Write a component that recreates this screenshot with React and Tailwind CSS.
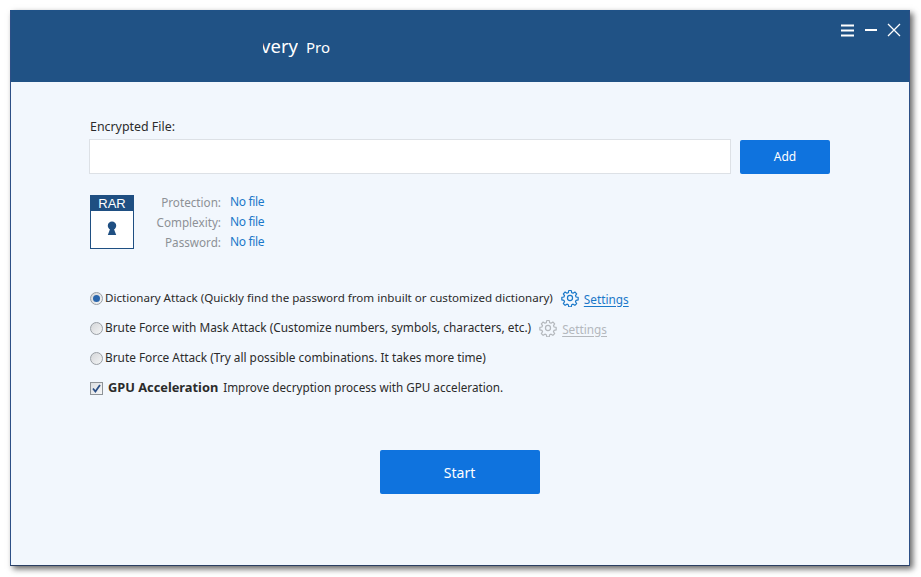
import { useState } from 'react';

const SettingsLink = ({ disabled }) => (
  <span className={`flex items-center gap-[5px] ${disabled ? 'text-[#b4b8bd]' : 'text-[#1a78c9]'}`}>
    <svg width="18" height="18" viewBox="0 0 24 24" fill="none" stroke="currentColor" strokeWidth="1.6" strokeLinejoin="round">
      <path d="M10.3 2h3.4l.5 2.8 1.9.8 2.4-1.6 2.4 2.4-1.6 2.4.8 1.9 2.8.5v3.4l-2.8.5-.8 1.9 1.6 2.4-2.4 2.4-2.4-1.6-1.9.8-.5 2.8h-3.4l-.5-2.8-1.9-.8-2.4 1.6-2.4-2.4 1.6-2.4-.8-1.9-2.8-.5v-3.4l2.8-.5.8-1.9-1.6-2.4 2.4-2.4 2.4 1.6 1.9-.8z" />
      <circle cx="12" cy="12" r="3.4" />
    </svg>
    <span className="pt-[3px] text-[11.8px] underline underline-offset-2">Settings</span>
  </span>
);

const Radio = ({ checked }) => (
  <span className="ml-[1px] flex h-[13px] w-[13px] shrink-0 items-center justify-center rounded-full border border-[#9a9fa5] bg-gradient-to-br from-[#d4d6d9] to-[#f4f5f6]">
    {checked && <span className="h-[7px] w-[7px] rounded-full bg-[#2a66ac]" />}
  </span>
);

const attacks = [
  { label: 'Dictionary Attack (Quickly find the password from inbuilt or customized dictionary)', size: 'pb-[1px] text-[11.6px]', checked: true, settings: 'on' },
  { label: 'Brute Force with Mask Attack (Customize numbers, symbols, characters, etc.)', size: 'text-[11.85px]', settings: 'off' },
  { label: 'Brute Force Attack (Try all possible combinations. It takes more time)', size: 'text-[11.85px]' },
];

const info = [
  ['Protection:', 'No file'],
  ['Complexity:', 'No file'],
  ['Password:', 'No file'],
];

export default function App() {
  const [path, setPath] = useState('');

  return (
    <div className="h-[577px] w-[921px] overflow-hidden bg-white pl-[10px] pt-[10px] text-[11.6px] text-[#2b2b2b] [font-family:'Noto_Sans',sans-serif]">
      <div className="flex h-[556px] w-[900px] flex-col border border-b-[#2b3f63] border-l-[#2d4f86] border-r-[#2d4f86] border-t-[#1f5288] bg-[#f2f7fd] shadow-[3px_3px_6px_rgba(0,0,0,0.6)]">
        {/* Title bar */}
        <div className="flex h-[71px] shrink-0 items-start justify-between bg-[#205285]">
          <div className="ml-[252px] mt-[21px] flex items-baseline gap-[8px] text-white">
            <span className="flex w-[35px] justify-end overflow-hidden text-[18.5px] leading-[28px]">very</span>
            <span className="text-[15px]">Pro</span>
          </div>
          <div className="mr-[8px] mt-[12px] flex items-center gap-[10px] text-white">
            <svg className="mr-[1px]" width="13" height="13" viewBox="0 0 13 13" stroke="currentColor" strokeWidth="2">
              <path d="M0 1.5h13M0 6.5h13M0 11.5h13" />
            </svg>
            <svg width="12" height="13" viewBox="0 0 12 13" stroke="currentColor" strokeWidth="2">
              <path d="M0 6h12" />
            </svg>
            <svg width="14" height="14" viewBox="0 0 14 14" stroke="currentColor" strokeWidth="1.3">
              <path d="M1 1l12 12M13 1L1 13" />
            </svg>
          </div>
        </div>

        <div className="flex flex-1 flex-col pl-[78px] pr-[79px] pt-[36px]">
          <label className="pl-[1px] text-[12.4px] leading-[18px]">Encrypted File:</label>

          <div className="mt-[3px] flex items-end gap-[9px]">
            <input
              value={path}
              onChange={(e) => setPath(e.target.value)}
              className="h-[35px] w-[642px] border border-[#dde1e6] bg-white outline-none"
            />
            <button className="h-[34px] w-[90px] rounded-[2px] bg-[#0f73de] text-[12px] text-white">Add</button>
          </div>

          {/* File info */}
          <div className="mt-[21px] flex items-start">
            <div className="ml-[1px] h-[54px] w-[44px] border border-[#1f4f82] bg-white">
              <div className="bg-[#1f4f82] text-center text-[13px] leading-[15px] text-white [font-family:'Liberation_Sans',sans-serif]">RAR</div>
              <div className="flex justify-center pt-[10px]">
                <svg width="12" height="15" viewBox="0 0 12 16" fill="#1f4f82">
                  <circle cx="6" cy="5" r="4.5" />
                  <path d="M4.5 7h3l3 8h-9z" />
                </svg>
              </div>
            </div>
            <div className="ml-[21px] mt-[-3px] grid grid-cols-[66px_auto] gap-x-[9px] leading-[20px]">
              {info.map(([name, value]) => (
                <div key={name} className="contents">
                  <span className="text-right text-[11.7px] text-[#8d9196]">{name}</span>
                  <span className="text-[12px] tracking-[-0.35px] text-[#1a78c9]">{value}</span>
                </div>
              ))}
            </div>
          </div>

          {/* Attack options */}
          <div className="mt-[37px] flex flex-col gap-[12px]">
            {attacks.map((a) => (
              <div key={a.label} className="flex h-[18px] items-center gap-[2px]">
                <Radio checked={a.checked} />
                <span className={`whitespace-nowrap ${a.size}`}>{a.label}</span>
                {a.settings && (
                  <span className="ml-[6px]">
                    <SettingsLink disabled={a.settings === 'off'} />
                  </span>
                )}
              </div>
            ))}
            <div className="flex h-[18px] items-center">
              <span className="ml-[1px] flex h-[13px] w-[13px] items-center justify-center border border-[#8e9398] bg-gradient-to-br from-[#dcdee1] to-[#f6f7f8] text-[#2b4f86]">
                <svg width="9" height="9" viewBox="0 0 9 9" fill="none" stroke="currentColor" strokeWidth="1.8">
                  <path d="M1 4.5l2.4 3L8 1" />
                </svg>
              </span>
              <b className="ml-[5px] whitespace-nowrap text-[12.8px]">GPU Acceleration</b>
              <span className="ml-[5px] whitespace-nowrap text-[11.7px]">Improve decryption process with GPU acceleration.</span>
            </div>
          </div>

          <button className="mx-auto mt-[53px] h-[44px] w-[160px] rounded-[2px] bg-[#0f73de] text-[14px] text-white">
            Start
          </button>
        </div>
      </div>
    </div>
  );
}
